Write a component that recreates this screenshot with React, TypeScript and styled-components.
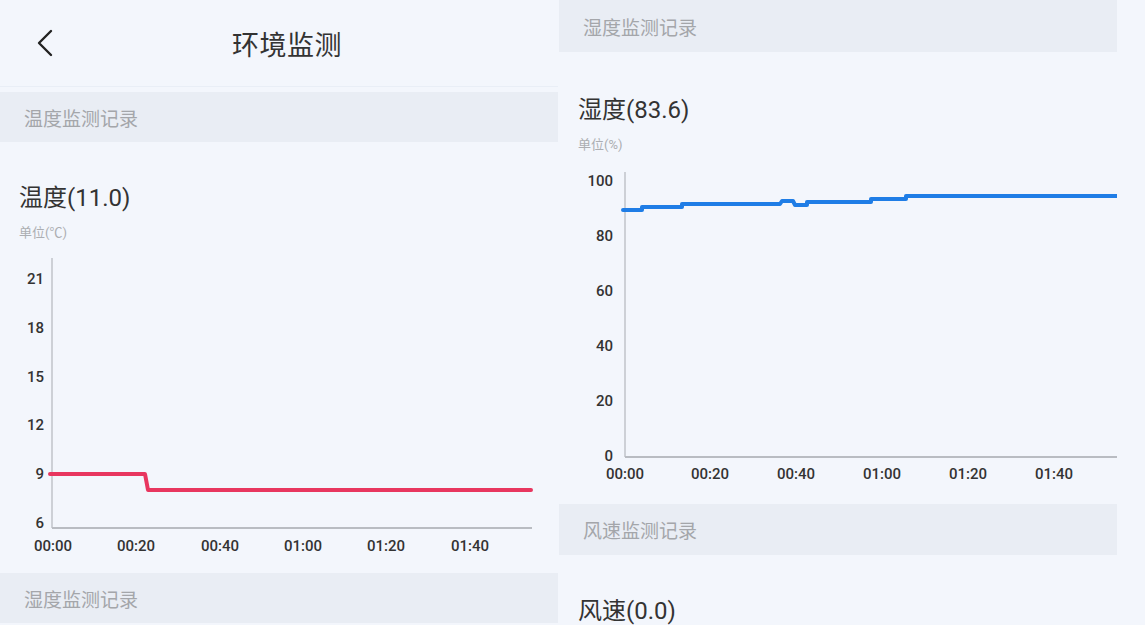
import React from "react";
import styled, { createGlobalStyle } from "styled-components";

const GlobalStyle = createGlobalStyle`
  html, body { margin: 0; padding: 0; background: #f3f6fc; }
  body { font-family: Roboto, "Noto Sans CJK SC", sans-serif; }
`;

const Screen = styled.div`
  display: flex;
  gap: 1px;
  width: 1145px;
  height: 625px;
  overflow: hidden;
  background: #f3f6fc;
`;

const Panel = styled.div`
  width: 558px;
  flex: none;
  height: 625px;
  overflow: hidden;
  display: flex;
  flex-direction: column;
`;

const Header = styled.header`
  height: 86px;
  flex: none;
  display: grid;
  grid-template-columns: 1fr auto 1fr;
  align-items: center;
  padding-left: 16px;
  border-bottom: 1px solid #e9eef6;
  margin-bottom: 5px;
`;

const BackButton = styled.button`
  justify-self: start;
  margin-left: 20px;
  padding: 0;
  border: none;
  background: none;
  display: flex;
  align-items: center;
  cursor: pointer;
`;

const Title = styled.h1`
  margin: 0;
  font-family: "Noto Sans CJK SC", sans-serif;
  font-size: 27px;
  font-weight: 400;
  color: #333;
  letter-spacing: 0.5px;
`;

const SectionBar = styled.div<{ $h?: number }>`
  height: ${(p) => p.$h ?? 50}px;
  flex: none;
  display: flex;
  align-items: center;
  padding-left: 24px;
  background: #e9edf4;
  font-family: "Noto Sans CJK SC", sans-serif;
  font-size: 19px;
  color: #a4a6aa;
`;

const Block = styled.section<{ $top: number }>`
  flex: none;
  padding-top: ${(p) => p.$top}px;
  display: flex;
  flex-direction: column;
`;

const ValueTitle = styled.div`
  padding-left: 19px;
  font-size: 24px;
  line-height: 26px;
  color: #333;
`;

const Unit = styled.div`
  padding-left: 19px;
  margin-top: 14px;
  font-size: 13px;
  line-height: 16px;
  color: #acaeb2;
`;

const ChartSvg = styled.svg`
  display: block;
  flex: none;
  overflow: hidden;
`;

type Tick = { label: string; pos: number };

type ChartProps = {
  width: number;
  height: number;
  axisX: number;
  axisTop: number;
  axisBottom: number;
  axisRight: number;
  yLabelX: number;
  xLabelY: number;
  yTicks: Tick[];
  xTicks: Tick[];
  path: string;
  color: string;
};

function LineChart(p: ChartProps) {
  return (
    <ChartSvg width={p.width} height={p.height} viewBox={`0 0 ${p.width} ${p.height}`}>
      <line x1={p.axisX} y1={p.axisTop} x2={p.axisX} y2={p.axisBottom} stroke="#cdd0d6" strokeWidth={2} />
      <line x1={p.axisX} y1={p.axisBottom} x2={p.axisRight} y2={p.axisBottom} stroke="#b9bcc2" strokeWidth={2} />
      <g fontFamily="Roboto, sans-serif" fontSize={15} fontWeight={500} fill="#333">
        {p.yTicks.map((t) => (
          <text key={t.label} x={p.yLabelX} y={t.pos} textAnchor="end" dominantBaseline="central">
            {t.label}
          </text>
        ))}
        {p.xTicks.map((t) => (
          <text key={t.label} x={t.pos} y={p.xLabelY} textAnchor="middle" dominantBaseline="central">
            {t.label}
          </text>
        ))}
      </g>
      <path d={p.path} fill="none" stroke={p.color} strokeWidth={4} strokeLinecap="round" strokeLinejoin="round" />
    </ChartSvg>
  );
}

const timeLabels = ["00:00", "00:20", "00:40", "01:00", "01:20", "01:40"];

const tempY = [21, 18, 15, 12, 9, 6].map((v) => ({ label: String(v), pos: 38 + (21 - v) * 16.27 }));
const tempX = [53, 136, 220, 303, 386, 470].map((x, i) => ({ label: timeLabels[i], pos: x }));

const humY = [100, 80, 60, 40, 20, 0].map((v) => ({ label: String(v), pos: 28 + (100 - v) * 2.75 }));
const humX = [66, 151, 237, 323, 409, 495].map((x, i) => ({ label: timeLabels[i], pos: x }));

const Chevron = () => (
  <svg width="18" height="28" viewBox="0 0 18 28">
    <path d="M15 2 L3 14 L15 26" fill="none" stroke="#222" strokeWidth={2.4} strokeLinecap="round" strokeLinejoin="round" />
  </svg>
);

const Filler = styled.div`
  flex: 1;
`;

export default function App() {
  return (
    <>
      <GlobalStyle />
      <Screen>
        <Panel>
          <Header>
            <BackButton aria-label="返回">
              <Chevron />
            </BackButton>
            <Title>环境监测</Title>
            <span />
          </Header>
          <SectionBar>温度监测记录</SectionBar>
          <Block $top={43}>
            <ValueTitle>温度(11.0)</ValueTitle>
            <Unit>单位(℃)</Unit>
            <LineChart
              width={558}
              height={332}
              axisX={52}
              axisTop={17}
              axisBottom={287}
              axisRight={532}
              yLabelX={44}
              xLabelY={305}
              yTicks={tempY}
              xTicks={tempX}
              path="M50 233 H145 L148 249 H531"
              color="#e8365f"
            />
          </Block>
          <SectionBar>湿度监测记录</SectionBar>
        </Panel>
        <Panel>
          <SectionBar $h={52}>湿度监测记录</SectionBar>
          <Block $top={45}>
            <ValueTitle>湿度(83.6)</ValueTitle>
            <Unit>单位(%)</Unit>
            <LineChart
              width={558}
              height={351}
              axisX={66}
              axisTop={19}
              axisBottom={304}
              axisRight={560}
              yLabelX={54}
              xLabelY={321}
              yTicks={humY}
              xTicks={humX}
              path="M64 57 H83 V54 H123 V51 H221 L223 48 H234 L236 52 H248 V49 H312 V46 H347 V43 H562"
              color="#1f7de6"
            />
          </Block>
          <SectionBar $h={51}>风速监测记录</SectionBar>
          <Block $top={43}>
            <ValueTitle>风速(0.0)</ValueTitle>
          </Block>
        </Panel>
        <Filler />
      </Screen>
    </>
  );
}
